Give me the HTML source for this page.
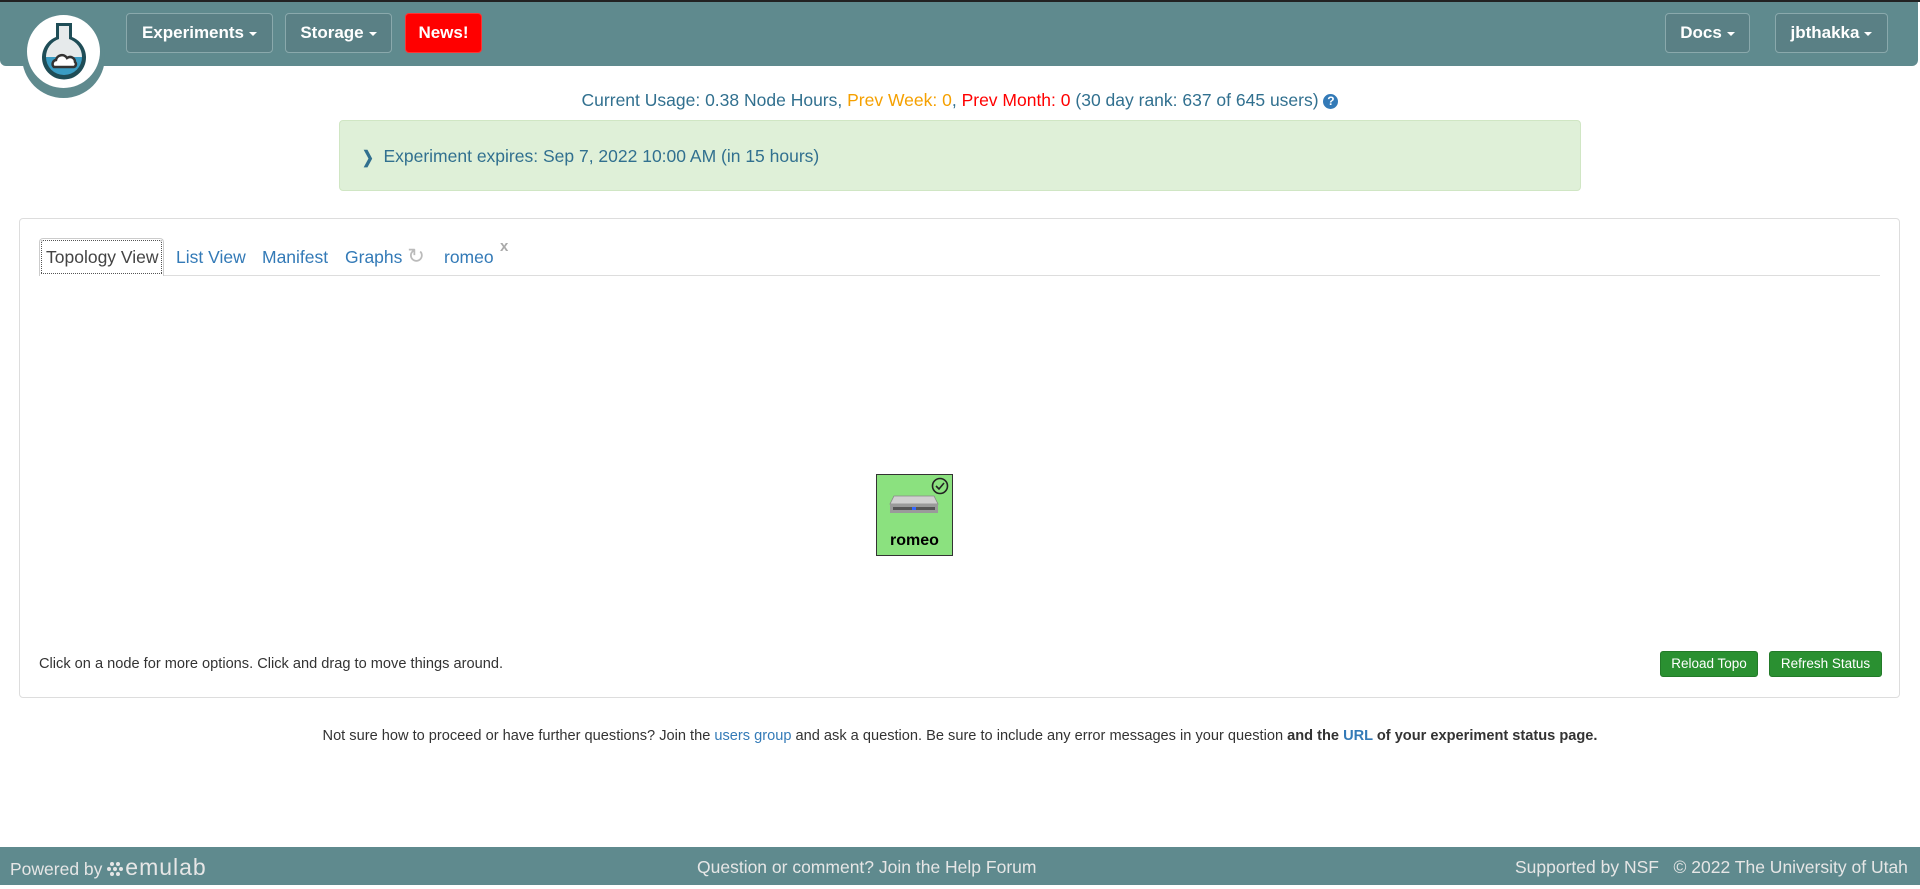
<!DOCTYPE html>
<html><head><meta charset="utf-8"><style>
*{box-sizing:border-box}
body{margin:0;width:1920px;height:885px;position:relative;overflow:hidden;background:#fff;font-family:"Liberation Sans",Arial,sans-serif;font-size:16px;color:#333}
.a{position:absolute}
.nav{left:0;top:2px;width:1918px;height:64px;background:#5f8a8e;border-radius:0 0 6px 6px}
.top{left:0;top:0;width:1920px;height:2px;background:#222}
.btn{position:absolute;top:13px;height:40px;border:1px solid #8aa9ac;border-radius:4px;background:#5a8085;color:#fff;font-weight:bold;font-size:17px;line-height:38px;text-align:center}
.car{display:inline-block;width:0;height:0;border-left:4px solid transparent;border-right:4px solid transparent;border-top:4px solid #fff;vertical-align:middle;margin-left:5px}
.tab{position:absolute;top:247px;font-size:17.5px;color:#337ab7}
.gb{position:absolute;top:651px;height:26px;background:#2a9031;border:1px solid #237a29;border-radius:3px;color:#fff;font-size:13.5px;line-height:24px;text-align:center}
a{color:#337ab7;text-decoration:none}
</style></head><body>
<div class="a top"></div>
<div class="a nav"></div>
<div class="a" style="left:22px;top:15px;width:83px;height:83px;border-radius:50%;background:#5f8a8e"></div>
<div class="a" style="left:27px;top:15px;width:73px;height:73px;border-radius:50%;background:#fff"></div>
<svg class="a" style="left:36px;top:20px" width="56" height="62" viewBox="0 0 56 62">
<path d="M20 3h16v14a22 22 0 1 1 -16 0z" fill="#1f4d57"/>
<path d="M23 6h10v13a19 19 0 0 1 13 18H10a19 19 0 0 1 13-18z" fill="#e6eaeb"/>
<path d="M10 37h36a18 18 0 0 1-36 0z" fill="#3a9dc4"/>
<path d="M18 47a4 4 0 0 1 2-7a6 6 0 0 1 11-2a5 5 0 0 1 8 4a3 3 0 0 1-1 5z" fill="#fff" stroke="#333" stroke-width="2.5"/>
</svg>
<div class="btn" style="left:126px;width:147px">Experiments<span class="car"></span></div>
<div class="btn" style="left:285px;width:107px">Storage<span class="car"></span></div>
<div class="btn" style="left:405px;width:77px;background:#f00;border-color:#f33">News!</div>
<div class="btn" style="left:1665px;width:85px">Docs<span class="car"></span></div>
<div class="btn" style="left:1775px;width:113px">jbthakka<span class="car"></span></div>

<div class="a" style="left:0;width:1920px;top:90px;text-align:center;color:#31708f;font-size:17.5px">Current Usage: 0.38 Node Hours, <span style="color:#f5a000">Prev Week: 0</span>, <span style="color:#f00">Prev Month: 0</span> (30 day rank: 637 of 645 users) <span style="display:inline-block;width:15px;height:15px;border-radius:50%;background:#337ab7;color:#fff;font-size:12px;line-height:15px;text-align:center;font-weight:bold;vertical-align:1px">?</span></div>

<div class="a" style="left:339px;top:120px;width:1242px;height:71px;background:#dff0d8;border:1px solid #d0e6c4;border-radius:4px"></div>
<div class="a" style="left:362px;top:146px;color:#31708f;font-size:17.5px"><b style="font-size:14px;display:inline-block;transform:scaleY(1.2)">&#10095;</b>&nbsp; Experiment expires: Sep 7, 2022 10:00 AM (in 15 hours)</div>

<div class="a" style="left:19px;top:218px;width:1881px;height:480px;border:1px solid #ddd;border-radius:4px"></div>
<div class="a" style="left:39px;top:275px;width:1841px;height:1px;background:#ddd"></div>
<div class="a" style="left:39px;top:238px;width:125px;height:38px;border:1px solid #ccc;border-bottom:none;border-radius:4px 4px 0 0;background:#fff;outline:1px dotted #555;outline-offset:-3px"></div>
<div class="tab" style="left:46px;color:#444">Topology View</div>
<div class="tab" style="left:176px">List View</div>
<div class="tab" style="left:262px">Manifest</div>
<div class="tab" style="left:345px">Graphs <span style="color:#bbb;font-size:21px;line-height:10px">&#8635;</span></div>
<div class="tab" style="left:444px">romeo</div>
<div class="a" style="left:500px;top:238px;color:#aaa;font-size:15px;font-weight:bold">x</div>

<div class="a" style="left:876px;top:474px;width:77px;height:82px;background:#8be17f;border:1px solid #333"></div>
<svg class="a" style="left:931px;top:477px" width="18" height="18" viewBox="0 0 18 18"><circle cx="9" cy="9" r="7.5" fill="none" stroke="#222" stroke-width="1.6"/><path d="M5 9l3 3 5-6" fill="none" stroke="#222" stroke-width="1.6"/></svg>
<svg class="a" style="left:889px;top:495px" width="50" height="19" viewBox="0 0 50 19"><path d="M5 1h40l4 8H1z" fill="#d0d0d0" stroke="#888" stroke-width="0.8"/><rect x="1" y="9" width="48" height="9" fill="#9a9a9a"/><rect x="4" y="12" width="42" height="3" fill="#555"/><rect x="23" y="12" width="4" height="3" fill="#36f"/></svg>
<div class="a" style="left:876px;top:532px;width:77px;text-align:center;font-weight:bold;font-size:16px;color:#000">romeo</div>

<div class="a" style="left:39px;top:656px;font-size:14.6px;color:#333">Click on a node for more options. Click and drag to move things around.</div>
<div class="gb" style="left:1660px;width:98px">Reload Topo</div>
<div class="gb" style="left:1769px;width:113px">Refresh Status</div>

<div class="a" style="left:0;width:1920px;top:728px;text-align:center;font-size:14.6px;color:#333">Not sure how to proceed or have further questions? Join the <a>users group</a> and ask a question. Be sure to include any error messages in your question <b>and the <a>URL</a> of your experiment status page.</b></div>

<div class="a" style="left:0;top:847px;width:1920px;height:38px;background:#5f8a8e;color:#e6e6e6;font-size:17.5px;line-height:40px">
<span class="a" style="left:10px">Powered by <svg width="18" height="16" viewBox="0 0 18 16" style="vertical-align:-2px"><g fill="#e6e6e6"><circle cx="5" cy="3" r="2"/><circle cx="11" cy="3" r="2"/><circle cx="2" cy="8" r="2"/><circle cx="8" cy="8" r="2"/><circle cx="14" cy="8" r="2"/><circle cx="5" cy="13" r="2"/><circle cx="11" cy="13" r="2"/></g></svg><span style="font-size:23px;letter-spacing:1px">emulab</span></span>
<span class="a" style="left:697px">Question or comment? Join the Help Forum</span>
<span class="a" style="left:1515px">Supported by NSF&nbsp;&nbsp;&nbsp;© 2022 The University of Utah</span>
</div>
</body></html>
